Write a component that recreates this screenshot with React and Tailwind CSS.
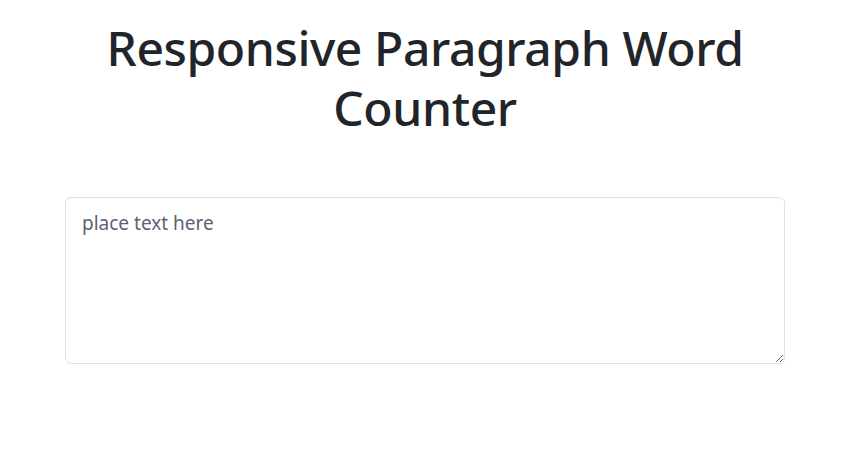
export default function App() {
  return (
    <div className="w-[850px] min-h-[465px] bg-white text-[#212529]" style={{ fontFamily: '"Noto Sans", "Open Sans", sans-serif' }}>
      <div className="mx-auto w-[720px] pt-[18px]">
        <h1 className="text-center text-[48px] leading-[60px] font-medium tracking-[-0.4px]">
          Responsive Paragraph Word Counter
        </h1>
        <div className="mt-[59px]">
          <textarea
            rows={5}
            placeholder="place text here"
            className="block w-full h-[167px] resize-y rounded-md border border-[#dee2e6] px-4 pt-[10px] pb-[7px] text-[19px] leading-[30px] text-[#212529] outline-none placeholder:text-[#5b6370]"
          />
        </div>
      </div>
    </div>
  );
}
